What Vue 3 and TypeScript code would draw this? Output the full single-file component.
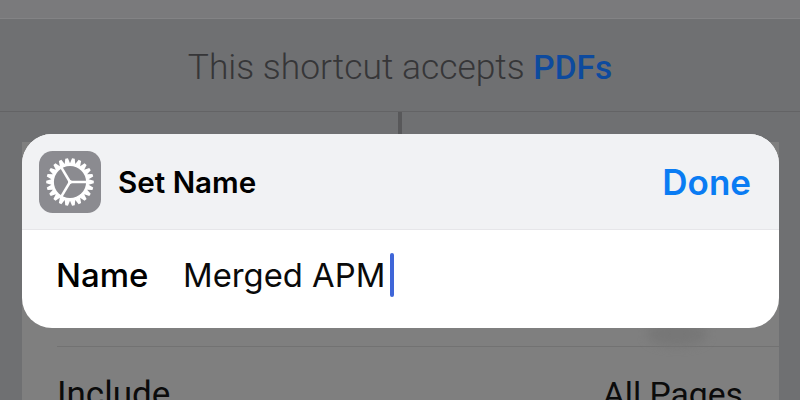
<script setup lang="ts">
const cx = 32, cy = 32
const teeth = 22
const pts: string[] = []
for (let i = 0; i < teeth; i++) {
  const a = (i / teeth) * Math.PI * 2
  const s = (Math.PI * 2) / teeth
  const list: [number, number][] = [[19.4, a - s * 0.5], [24.6, a - s * 0.2], [24.6, a + s * 0.2], [19.4, a + s * 0.5]]
  for (const [r, t] of list) pts.push(`${(cx + r * Math.cos(t)).toFixed(2)},${(cy + r * Math.sin(t)).toFixed(2)}`)
}
const gear = pts.join(' ')
</script>

<template>
  <div class="page">
    <div class="top"></div>
    <div class="accepts">
      <span class="accepts-text">This shortcut accepts <b>PDFs</b></span>
    </div>
    <div class="connector"></div>
    <div class="card">
      <div class="row-spacer"><span class="blob"></span></div>
      <div class="include">
        <span>Include</span>
        <span class="include-value">All Pages</span>
      </div>
    </div>
    <div class="dialog">
      <div class="head">
        <svg class="icon" viewBox="0 0 64 64" aria-hidden="true">
          <rect width="64" height="64" rx="14" fill="#8b8b90" />
          <polygon :points="gear" fill="#fff" />
          <circle cx="32" cy="32" r="16.6" fill="#8b8b90" />
          <g stroke="#fff" stroke-width="2.6" stroke-linecap="butt">
            <line x1="32" y1="32" x2="49" y2="32" />
            <line x1="32" y1="32" x2="23" y2="17" />
            <line x1="32" y1="32" x2="23" y2="47" />
          </g>
          <circle cx="32" cy="32" r="2" fill="#fff" />
        </svg>
        <span class="title">Set Name</span>
        <span class="done">Done</span>
      </div>
      <div class="field">
        <span class="label">Name</span>
        <span class="value">Merged APM</span>
        <span class="caret"></span>
      </div>
    </div>
  </div>
</template>

<style scoped>
.page {
  position: relative;
  width: 800px;
  height: 400px;
  overflow: hidden;
  background: #6f7072;
  font-family: Inter, "Liberation Sans", sans-serif;
  display: flex;
  flex-direction: column;
}
.top {
  height: 18px;
  flex: none;
  background: #7a7a7c;
  border-bottom: 1px solid #838385;
}
.accepts {
  height: 92px;
  flex: none;
  display: flex;
  align-items: center;
  justify-content: center;
  border-bottom: 1px solid #636365;
}
.accepts-text {
  font-family: Roboto, sans-serif;
  font-size: 35.4px;
  font-weight: 300;
  color: #363638;
  margin-top: 3px;
}
.accepts-text b {
  font-size: 33.5px;
  font-weight: 500;
  color: #0d4a9e;
}
.connector {
  width: 4px;
  height: 30px;
  flex: none;
  margin-left: 398px;
  background: #58585a;
}
.card {
  flex: 1;
  margin: 0 21px 0 22px;
  background: #7f7f7f;
  display: flex;
  flex-direction: column;
}
.row-spacer {
  position: relative;
  height: 204px;
  flex: none;
  margin-left: 35px;
  border-bottom: 1px solid #727272;
}
.blob {
  position: absolute;
  left: 590px;
  top: 180px;
  width: 60px;
  height: 24px;
  border-radius: 50%;
  background: #777;
  filter: blur(5px);
}
.include {
  display: flex;
  justify-content: space-between;
  align-items: baseline;
  padding: 27px 36px 0 35px;
  font-family: Roboto, sans-serif;
  font-size: 35px;
  font-weight: 400;
  color: #0b0b0b;
}
.include-value {
  font-size: 33.7px;
}
.dialog {
  position: absolute;
  left: 22px;
  top: 134px;
  width: 757px;
  height: 194px;
  border-radius: 30px;
  overflow: hidden;
  background: #fff;
  display: flex;
  flex-direction: column;
}
.head {
  height: 95px;
  flex: none;
  background: #f1f2f4;
  border-bottom: 1px solid #e6e6e9;
  display: flex;
  align-items: center;
  padding: 0 28px 0 17px;
}
.icon {
  width: 62px;
  height: 62px;
  flex: none;
}
.title {
  margin-left: 17px;
  font-size: 29.6px;
  font-weight: 600;
  color: #000;
}
.done {
  margin-left: auto;
  font-size: 35px;
  font-weight: 600;
  color: #0a7cf3;
}
.field {
  flex: 1;
  display: flex;
  align-items: center;
  padding: 0 0 8px 34px;
}
.label {
  font-size: 33px;
  font-weight: 500;
  color: #000;
  width: 127px;
}
.value {
  font-size: 32.8px;
  font-weight: 400;
  color: #0a0a0a;
}
.caret {
  width: 4px;
  height: 44px;
  margin-left: 5px;
  border-radius: 2px;
  background: #3f66d8;
}
</style>
